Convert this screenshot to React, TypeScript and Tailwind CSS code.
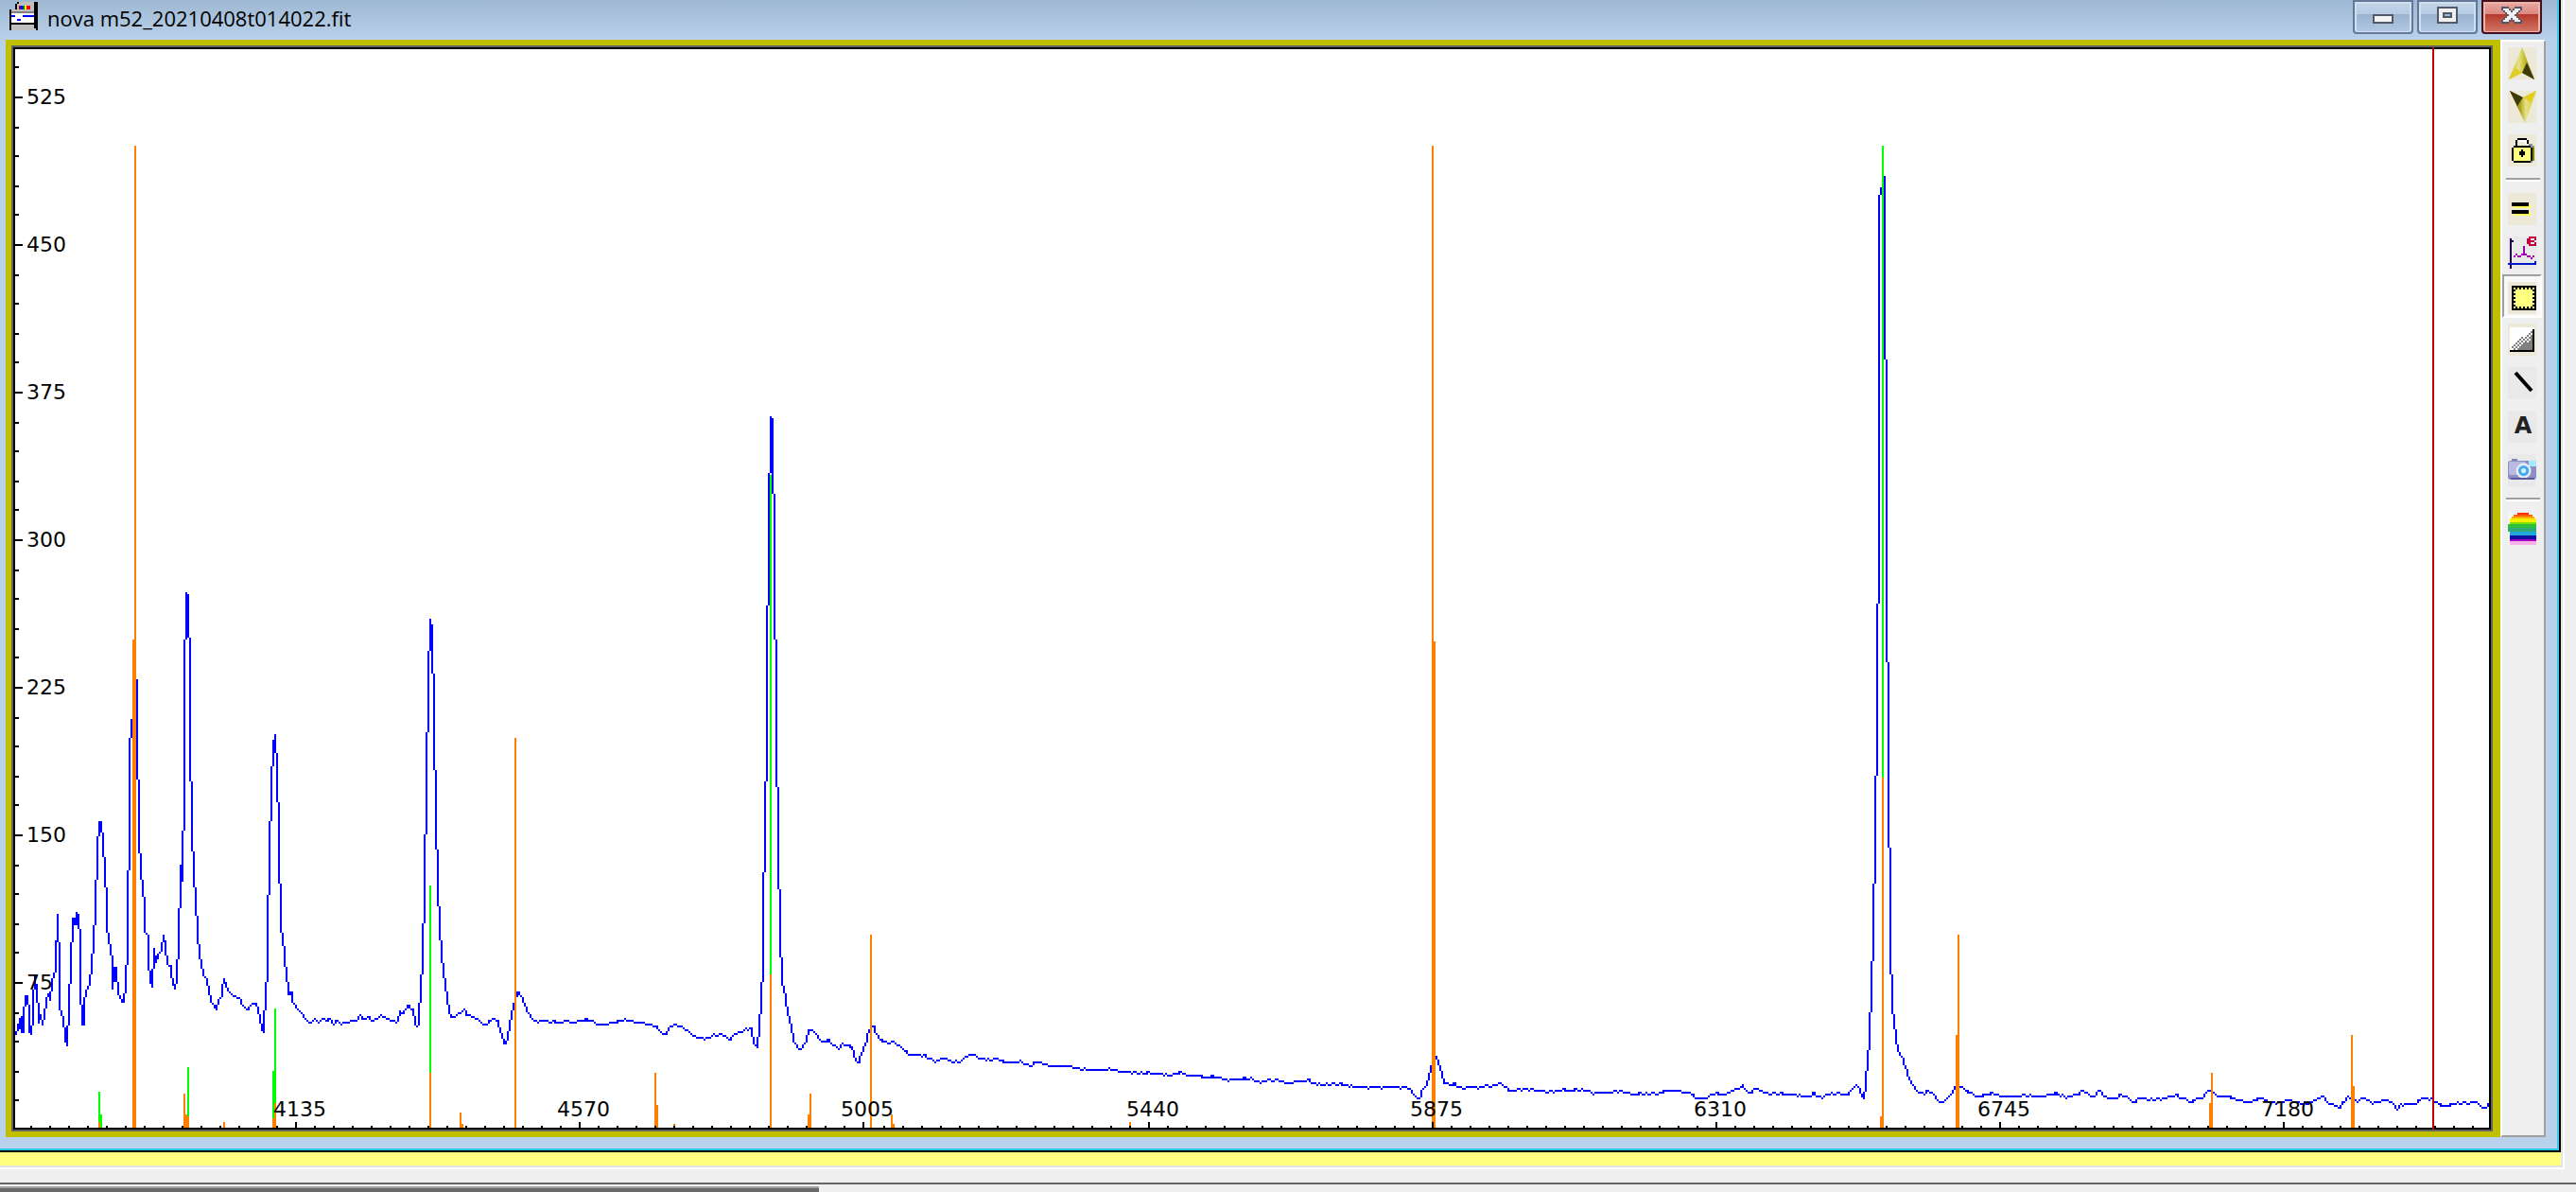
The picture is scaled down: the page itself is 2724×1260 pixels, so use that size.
import type { ReactNode } from "react";

// Spectrum samples as x,y pairs in plot pixels
const TRACE = `17,1094 19,1088 21,1076 22,1088 23,1074 24,1093 26,1064 28,1053 30,1062 31,1092 33,1095 35,1074 36,1047 37,1031 39,1050 40,1060
41,1083 43,1073 45,1085 47,1074 49,1060 51,1050 53,1058 55,1039 57,1031 59,1027 60,995 61,967 62,997 63,1068 65,1071 67,1077 69,1098 71,1107
73,1064 75,1017 77,977 78,971 80,979 81,964 83,968 85,999 86,1062 88,1085 89,1062 91,1049 95,1041 97,1019 99,997 101,962 103,900 105,869
107,870 109,892 111,920 113,956 114,987 116,999 118,1011 119,1046 122,1023 124,1039 126,1053 129,1060 131,1060 133,1041 135,999 136,920
137,839 138,780 140,761 143,740 144,718 145,778 146,824 147,880 149,924 151,936 153,960 154,987 156,989 157,1015 159,1037 161,1045 163,1003
165,1019 166,1015 169,1007 171,1005 173,988 175,1001 177,1021 180,1021 182,1035 185,1047 187,1035 189,995 190,960 191,914 192,932 194,879
195,726 197,626 199,631 200,675 201,797 203,857 204,900 206,938 208,969 209,989 211,1009 213,1021 216,1033 219,1037 221,1050 224,1060
229,1069 231,1058 234,1054 237,1035 241,1047 247,1053 254,1056 257,1065 262,1068 266,1062 271,1060 274,1072 277,1088 279,1093 280,1068
282,1039 283,989 285,906 287,831 289,790 291,776 293,817 295,880 296,934 298,987 300,1001 302,1023 304,1039 306,1052 308,1049 310,1060
313,1065 319,1071 325,1081 329,1081 333,1077 337,1083 341,1077 345,1081 348,1077 352,1083 356,1080 360,1082 365,1082 373,1079 378,1079
381,1072 383,1079 388,1076 395,1080 403,1074 413,1079 420,1081 423,1070 425,1073 433,1063 437,1070 440,1084 442,1085 445,1051 447,1010
449,944 451,825 453,724 455,654 457,666 459,762 461,866 463,933 465,984 467,1007 469,1029 471,1042 473,1055 475,1068 477,1077 483,1074
491,1068 494,1073 502,1077 512,1084 522,1077 527,1082 531,1097 534,1105 537,1099 539,1084 542,1068 545,1058 548,1049 553,1058 560,1075
566,1080 577,1080 592,1082 598,1080 605,1082 613,1080 623,1079 633,1084 650,1082 660,1079 673,1081 687,1084 693,1085 700,1094 705,1094
708,1088 713,1083 720,1086 728,1091 736,1097 749,1099 753,1095 765,1094 771,1100 778,1094 787,1090 794,1087 797,1103 801,1109 803,1086
805,1060 806,1037 807,980 809,870 811,782 812,640 814,500 815,442 817,445 820,677 822,834 823,903 825,980 826,1012 827,1040 831,1055
833,1072 836,1083 839,1098 843,1109 846,1111 851,1105 853,1098 855,1091 858,1089 863,1095 870,1103 876,1101 881,1106 887,1109 891,1105
901,1107 905,1122 908,1123 912,1112 916,1103 919,1090 923,1084 926,1093 930,1099 937,1103 945,1101 955,1110 963,1115 979,1117 988,1123
999,1119 1008,1123 1017,1123 1021,1118 1027,1115 1035,1119 1046,1121 1054,1119 1062,1124 1079,1123 1091,1127 1097,1123 1113,1128
1128,1127 1137,1130 1155,1132 1173,1131 1187,1134 1211,1135 1238,1137 1250,1135 1256,1138 1267,1137 1274,1140 1285,1139 1300,1142
1323,1141 1332,1145 1343,1142 1354,1143 1363,1146 1383,1142 1390,1146 1400,1147 1414,1146 1424,1148 1443,1150 1485,1150 1491,1152
1498,1161 1501,1161 1505,1152 1509,1147 1513,1132 1515,1120 1519,1119 1523,1130 1527,1146 1538,1147 1546,1151 1556,1149 1564,1151
1572,1148 1582,1148 1587,1146 1596,1153 1615,1152 1637,1155 1653,1153 1677,1153 1687,1157 1712,1154 1728,1157 1754,1157 1764,1153
1774,1154 1787,1156 1793,1161 1806,1161 1813,1157 1825,1157 1833,1153 1843,1149 1850,1157 1857,1151 1870,1157 1890,1157 1910,1160
1918,1157 1927,1161 1934,1157 1955,1157 1963,1148 1967,1153 1971,1165 1973,1143 1975,1122 1977,1097 1979,1047 1981,987 1983,883 1985,760
1987,520 1988,205 1990,200 1991,186 1993,188 1994,380 1996,700 1998,897 1999,1002 2001,1062 2003,1083 2005,1098 2007,1112 2011,1117
2015,1128 2019,1142 2023,1148 2027,1154 2035,1157 2040,1154 2045,1158 2052,1167 2057,1164 2063,1158 2068,1150 2074,1149 2080,1154
2092,1160 2108,1156 2113,1159 2132,1160 2138,1158 2153,1160 2175,1157 2187,1161 2198,1157 2203,1153 2208,1158 2215,1161 2219,1153
2227,1161 2233,1163 2244,1158 2257,1166 2263,1161 2273,1163 2287,1162 2300,1158 2312,1163 2316,1168 2320,1163 2330,1161 2333,1155
2337,1153 2345,1160 2357,1160 2367,1163 2378,1166 2392,1161 2402,1167 2423,1164 2440,1168 2456,1159 2462,1167 2468,1168 2473,1173
2478,1167 2483,1160 2493,1165 2500,1161 2508,1167 2523,1163 2530,1166 2534,1173 2540,1168 2555,1167 2562,1161 2572,1163 2586,1171
2597,1167 2613,1167 2617,1164 2627,1173 2632,1167`;

const ORANGE = "#ff8000";
const GREEN = "#00ff00";

// Reference lines: x, top, color
const LINES: [number, number, string][] = [
  [104, 1154, GREEN],
  [106, 1178, GREEN],
  [104, 1186, ORANGE],
  [140, 676, ORANGE],
  [142, 154, ORANGE],
  [194, 1156, ORANGE],
  [196, 1178, ORANGE],
  [198, 1128, GREEN],
  [198, 1180, ORANGE],
  [236, 1186, ORANGE],
  [288, 1132, GREEN],
  [288, 1182, ORANGE],
  [290, 1066, GREEN],
  [290, 1166, ORANGE],
  [454, 936, GREEN],
  [454, 1134, ORANGE],
  [486, 1176, ORANGE],
  [488, 1188, ORANGE],
  [544, 780, ORANGE],
  [692, 1134, ORANGE],
  [694, 1168, ORANGE],
  [712, 1188, ORANGE],
  [814, 502, GREEN],
  [814, 1030, ORANGE],
  [854, 1178, ORANGE],
  [856, 1156, ORANGE],
  [920, 988, ORANGE],
  [942, 1178, ORANGE],
  [944, 1188, ORANGE],
  [1194, 1186, ORANGE],
  [1514, 154, ORANGE],
  [1516, 678, ORANGE],
  [1988, 1180, ORANGE],
  [1990, 154, GREEN],
  [1990, 822, ORANGE],
  [2068, 1094, ORANGE],
  [2070, 988, ORANGE],
  [2336, 1166, ORANGE],
  [2338, 1134, ORANGE],
  [2486, 1094, ORANGE],
  [2488, 1148, ORANGE],
];

const X_LABELS: [string, number][] = [
  ["4135", 312],
  ["4570", 612],
  ["5005", 912],
  ["5440", 1214],
  ["5875", 1514],
  ["6310", 1814],
  ["6745", 2114],
  ["7180", 2414],
];

const Y_LABELS = [525, 450, 375, 300, 225, 150, 75];

const even = (n: number) => Math.round(n / 2) * 2;

// Draws the trace the way a bitmap plotter does: one vertical run per column
function columns() {
  const pts = TRACE.split(/\s+/).map((p) => p.split(",").map(Number));
  const at = (x: number) => {
    const i = pts.findIndex((p) => p[0] >= x);
    if (i <= 0) return i === 0 ? pts[0][1] : pts[pts.length - 1][1];
    const [x0, y0] = pts[i - 1];
    const [x1, y1] = pts[i];
    const noise = x > 330 ? Math.sin(x * 1.3) * Math.cos(x * 0.37) * 1.4 : 0;
    return y0 + ((y1 - y0) * (x - x0)) / (x1 - x0) + noise;
  };
  let d = "";
  for (let x = 16; x < 2632; x += 2) {
    const ys = [at(x), at(x + 1), at(x + 2)];
    const top = even(Math.min(...ys) - 1);
    const bottom = Math.max(even(Math.max(...ys) - 1), top + 2);
    d += `M${x} ${top}h2V${bottom}h-2z`;
  }
  return d;
}

function Chart() {
  const yMinor = Array.from({ length: 36 }, (_, i) => even(1194 - (i + 1) * 31.2));
  const xMinor = Array.from({ length: 130 }, (_, i) => 32 + i * 20).map((x) => (x > 913 ? x + 2 : x));
  return (
    <svg viewBox="14 50 2620 1144" className="block h-auto w-full bg-white" shapeRendering="crispEdges" role="img">
      <path d={columns()} fill="#0000ff" />
      {LINES.map(([x, y, color], i) => (
        <rect key={i} x={x} y={y} width={2} height={1192 - y} fill={color} />
      ))}
      {yMinor.map((y) => (
        <rect key={y} x={16} y={y} width={4} height={2} />
      ))}
      {xMinor.map((x) => (
        <rect key={x} x={x} y={1190} width={2} height={2} />
      ))}
      <path d="M14 50H2634V1194H14zM16 52V1192H2632V52z" fillRule="evenodd" />
      <rect x={2572} y={50} width={2} height={1144} fill="#c00000" />
      <g className="font-['DejaVu_Sans',sans-serif] text-[22px]">
        {Y_LABELS.map((v) => {
          const y = 1194 - (v / 75) * 156;
          return (
            <g key={v}>
              <rect x={16} y={y} width={8} height={2} />
              <text x={28} y={y + 8}>{v}</text>
            </g>
          );
        })}
        {X_LABELS.map(([label, x]) => (
          <g key={label}>
            <rect x={x} y={1186} width={2} height={6} />
            <text x={x - 23} y={1180}>{label}</text>
          </g>
        ))}
      </g>
    </svg>
  );
}

function Icon({ bg, children }: { bg: string; children: ReactNode }) {
  return (
    <svg viewBox="0 0 15 17" className="h-[34px] w-[30px]" shapeRendering="crispEdges">
      <rect width="15" height="17" fill={bg} />
      {children}
    </svg>
  );
}

function ToolButton({ label, active, children }: { label: string; active?: boolean; children: ReactNode }) {
  return (
    <button
      type="button"
      aria-label={label}
      aria-pressed={active}
      className={
        active
          ? "flex h-[46px] w-[42px] items-center justify-center border-2 border-t-[#a0a0a0] border-l-[#a0a0a0] border-r-white border-b-white bg-[#f8f8f8] pt-1"
          : "flex h-[46px] w-[42px] items-center justify-center"
      }
    >
      {children}
    </button>
  );
}

function Separator() {
  return <div className="mx-1 my-[6px] h-1 border-t-2 border-b-2 border-t-[#a0a0a0] border-b-white" />;
}

function Toolbar() {
  return (
    <div className="w-12 shrink-0 border-t-2 border-r-2 border-b-2 border-l-2 border-t-white border-r-[#a0a0a0] border-b-[#a0a0a0] border-l-white bg-[#efefef]">
      <ToolButton label="Up">
        <Icon bg="#ece9d8">
          <defs>
            <linearGradient id="gold" x1="0" x2="1">
              <stop offset="0" stopColor="#d6c010" />
              <stop offset="0.4" stopColor="#e4e08a" />
              <stop offset="0.6" stopColor="#c8c030" />
              <stop offset="1" stopColor="#807808" />
            </linearGradient>
            <linearGradient id="goldDown" x1="0" x2="1">
              <stop offset="0" stopColor="#4a4408" />
              <stop offset="0.4" stopColor="#b0a818" />
              <stop offset="0.6" stopColor="#e4e08a" />
              <stop offset="1" stopColor="#e0c810" />
            </linearGradient>
          </defs>
          <g shapeRendering="auto">
            <path d="M7.5 0L14 17L7.5 13.5L.5 17z" fill="url(#gold)" />
            <path d="M10 8L14 17L7.5 13.5z" fill="#3f3a08" />
            <path d="M7.5 13.5L.5 17L4 11z" fill="#e2cc20" />
          </g>
        </Icon>
      </ToolButton>
      <ToolButton label="Down">
        <Icon bg="#ece9d8">
          <g shapeRendering="auto">
            <path d="M9 17L1 0L8 3.5L15 0z" fill="url(#goldDown)" />
            <path d="M5 8L1 0L8 3.5z" fill="#3f3a08" />
            <path d="M8 3.5L15 0L12 6z" fill="#e2cc20" />
          </g>
        </Icon>
      </ToolButton>
      <ToolButton label="Lock">
        <Icon bg="#ece9d8">
          <path d="M12 6h2v8h-2z" fill="#808000" />
          <path d="M11 5h2v1h1v1h-3zM12 14h1v1h-1z" fill="#909090" />
          <path d="M4 3h1V2h5v1h1v2h-1V3H5v3H4z" />
          <path d="M6 3h4v2H9V4H6z" fill="#fff" />
          <path d="M3 6h9v1h1v7h-1v1H3v-1H2V7h1z" />
          <path d="M3 7h9v7H3z" fill="#ffff80" />
          <path d="M7 8h1v1h1v2H8v1H7v-1H6V9h1z" />
        </Icon>
      </ToolButton>
      <Separator />
      <ToolButton label="Equal scale">
        <Icon bg="#ece9d8">
          <path d="M3 6h9v2H3zM3 10h9v2H3z" fill="#ffff60" />
          <path d="M2 5h9v2H2zM2 9h9v2H2z" />
        </Icon>
      </ToolButton>
      <ToolButton label="Calibration">
        <Icon bg="#e9e9e9">
          <path d="M1 1h1v1h1v1H2v14H1z" fill="#200050" />
          <path d="M0 14h14v-1h1v2H0z" fill="#0018c8" />
          <path d="M3 10h1v1H3zM4 9h1v1H4zM5 10h2V9h1V5h1v4h1v1H7v1H5zM10 10h1v1h-1zM11 10h1v1h-1zM12 11h1v1h-1zM13 10h1v1h-1z" fill="#a000b0" />
          <path d="M11 0h4v2h-1V1h-2v3h2V3h1v2h-4V4h-1V1h1z" fill="#c00040" />
          <path d="M12 2h2v1h-2z" fill="#c00040" />
        </Icon>
      </ToolButton>
      <ToolButton label="Region" active>
        <Icon bg="#ece9d8">
          <path d="M2 2h13v13H2z" />
          <path d="M3 3h11v11H3z" fill="#ffff80" />
          <path
            d="M4.500 3v1M6.500 3v1M8.500 3v1M10.500 3v1M12.500 3v1M4.500 13v1M6.500 13v1M8.500 13v1M10.500 13v1M12.500 13v1M3 4.500h1M3 6.500h1M3 8.500h1M3 10.500h1M3 12.500h1M13 4.500h1M13 6.500h1M13 8.500h1M13 10.500h1M13 12.500h1"
            stroke="#000"
            strokeWidth="1"
          />
        </Icon>
      </ToolButton>
      <ToolButton label="Contrast">
        <Icon bg="#ece9d8">
          <defs>
            <pattern id="dither" width="2" height="2" patternUnits="userSpaceOnUse">
              <path d="M0 0h1v1H0zM1 1h1v1H1z" fill="#808080" />
            </pattern>
          </defs>
          <path d="M1 2h13v13H1z" fill="#fff" />
          <path d="M13 4v10H2v-2h1v-1h1v-2h2V8h1V7h2V6h1V5h2V4z" fill="url(#dither)" />
          <path d="M13 7v7H5v-1h2v-1h1v-1h1v-1h2V9h1V7z" fill="#808080" />
          <path d="M13 3h1v12H1v-1h12z" />
        </Icon>
      </ToolButton>
      <ToolButton label="Line">
        <Icon bg="#e9e9e9">
          <path d="M4 3l8.500 9.500" stroke="#000" strokeWidth="2" shapeRendering="auto" />
        </Icon>
      </ToolButton>
      <ToolButton label="Text">
        <Icon bg="#e9e9e9">
          <text x="8" y="12" textAnchor="middle" className="fill-[#222] font-['DejaVu_Sans',sans-serif] text-[12px] font-bold">
            A
          </text>
        </Icon>
      </ToolButton>
      <ToolButton label="Snapshot">
        <Icon bg="#e9e9e9">
          <g shapeRendering="auto">
            <path d="M2 4V2.500h3V4z" fill="#8088b8" />
            <rect x="0" y="3.500" width="15" height="10" rx="1.500" fill="#8c8ec4" />
            <rect x="0.500" y="4" width="9" height="7" rx="1" fill="#b8bae0" />
            <path d="M11 3.500h4v3h-4z" fill="#a8e8ff" />
            <circle cx="8.300" cy="8.800" r="4" fill="#e6ecfa" />
            <circle cx="8.300" cy="8.800" r="2.800" fill="#48a8e8" />
            <circle cx="8.300" cy="8.800" r="1.300" fill="#c8f4ff" />
            <path d="M1 12.500h13v1H2z" fill="#5c5c9c" />
          </g>
        </Icon>
      </ToolButton>
      <Separator />
      <ToolButton label="Rainbow">
        <Icon bg="#f4f4f4">
          <path d="M5 0h6v1H5z" fill="#ff3000" />
          <path d="M3 1h10v1H3z" fill="#ff6010" />
          <path d="M2 2h12v1H2z" fill="#ffa800" />
          <path d="M1 3h14v2H1z" fill="#f4f000" />
          <path d="M1 5h14v1H1z" fill="#80e000" />
          <path d="M0 6h15v2H0z" fill="#30c040" />
          <path d="M0 8h15v2H0z" fill="#30a878" />
          <path d="M1 10h14v2H1z" fill="#20a8d8" />
          <path d="M1 12h14v2H1z" fill="#1010a0" />
          <path d="M1 14h14v1H1z" fill="#a000c0" />
          <path d="M1 15h14v2H1z" fill="#f8b0e8" />
        </Icon>
      </ToolButton>
    </div>
  );
}

function CaptionButton({ label, danger, children }: { label: string; danger?: boolean; children: ReactNode }) {
  return (
    <button
      type="button"
      aria-label={label}
      className={
        danger
          ? "flex h-9 w-16 items-center justify-center rounded-b border-2 border-[#43101c] bg-linear-to-b from-[#eaa9a1] from-0% via-[#d9857a] via-45% to-[#cf7464] shadow-[inset_0_0_0_2px_#e9b4ac]"
          : "flex h-9 w-16 items-center justify-center rounded-b border-2 border-[#64789a] bg-linear-to-b from-[#c0d3e8] from-0% via-[#b6cce4] via-45% to-[#b4cae4] shadow-[inset_0_0_0_2px_#cfdfef]"
      }
    >
      <span
        className={
          danger
            ? "mt-3 flex h-[18px] w-14 items-start justify-center bg-linear-to-b from-[#b4382a] to-[#d07466]"
            : "mt-3 flex h-[18px] w-14 items-start justify-center bg-linear-to-b from-[#98b2cf] to-[#b2c8e2]"
        }
      >
        <svg viewBox="0 0 11 9" className="-mt-2 h-[18px] w-[22px] shrink-0" shapeRendering="crispEdges">
          {children}
        </svg>
      </span>
    </button>
  );
}

function TitleBar() {
  return (
    <header className="flex h-[42px] items-start bg-linear-to-b from-[#9fb8d3] to-[#b9d1ea] pr-4 pl-[10px]">
      <svg viewBox="0 0 15 15" className="mt-[2px] h-[30px] w-[30px] shrink-0" shapeRendering="crispEdges">
        <path d="M0 4h3V1h1V0h11v15h-1v-1H1v1H0z" />
        <path d="M4 1h1V0h8v4H1v1h12V4H4z" fill="#c0c0c0" />
        <path d="M1 12h12v3H1z" fill="#c0c0c0" />
        <path d="M1 5h12v1H1z" fill="#808080" />
        <path d="M1 6h12v5H1z" fill="#fff" />
        <path d="M1 7h2v1H1zM7 7h6v1H7zM4 9h2v1H4z" fill="#00f" />
        <path d="M5 2h1v2H5z" fill="#800080" />
        <path d="M6 2h1v2H6z" fill="#00f" />
        <path d="M7 2h1v2H7z" fill="#008000" />
        <path d="M8 2h1v2H8z" fill="#ff0" />
        <path d="M9 2h2v2H9z" fill="#f00" />
      </svg>
      <h1 className="ml-[10px] flex-1 font-['Open_Sans',sans-serif] text-[22px] leading-[38px] text-black">
        nova m52_20210408t014022.fit
      </h1>
      <div className="flex gap-1">
        <CaptionButton label="Minimize">
          <path d="M0 4h11v5H0z" fill="#50586a" />
          <path d="M1 5h9v3H1z" fill="#f4f4f4" />
        </CaptionButton>
        <CaptionButton label="Maximize">
          <path d="M0 0h11v9H0z" fill="#50586a" />
          <path d="M1 1h9v7H1z" fill="#f0f0f0" />
          <path d="M3 3h5v3H3z" fill="#50586a" />
          <path d="M4 4h3v1H4z" fill="#9cb4d0" />
        </CaptionButton>
        <CaptionButton label="Close" danger>
          <path d="M0 0h4v1h1v1h1V1h1V0h4v2h-1v1H9v1H8v1h1v1h1v1h1v2H7V8H6V7H5v1H4v1H0V7h1V6h1V5h1V4H2V3H1V2H0z" fill="#50586a" />
          <path d="M1 1h3v1h1v1h1V2h1V1h3v1H9v1H8v1H7v1h1v1h1v1h1v1H7V7H6V6H5v1H4v1H1V7h1V6h1V5h1V4H3V3H2V2H1z" fill="#f0f0f0" />
        </CaptionButton>
      </div>
    </header>
  );
}

export default function App() {
  return (
    <div className="min-h-screen overflow-hidden bg-[#efefef]">
      <div className="mr-3 border-r-2 border-b-2 border-white">
        <div className="border-r-2 border-b-2 border-[#e3e3e3] bg-[#ffff80] pb-[14px]">
          <div className="border-r-2 border-b-2 border-black">
            <div className="border-r-2 border-b-2 border-r-[#3cc8f0] border-b-[#28c8dc] bg-[#b9d1ea]">
              <TitleBar />
              <main className="flex pr-3 pb-3 pl-[6px]">
                <div className="min-w-0 flex-1 border-t-[6px] border-r-8 border-b-[6px] border-l-[6px] border-[#c0c000]">
                  <div className="border-2 border-[#646464]">
                    <Chart />
                  </div>
                </div>
                <Toolbar />
              </main>
            </div>
          </div>
        </div>
      </div>
      <footer className="mt-[14px] border-t-2 border-[#646464] pt-[2px]">
        <div className="h-[6px] w-[866px] max-w-full border-t-2 border-[#a0a0a0] bg-[#696969]" />
      </footer>
    </div>
  );
}
